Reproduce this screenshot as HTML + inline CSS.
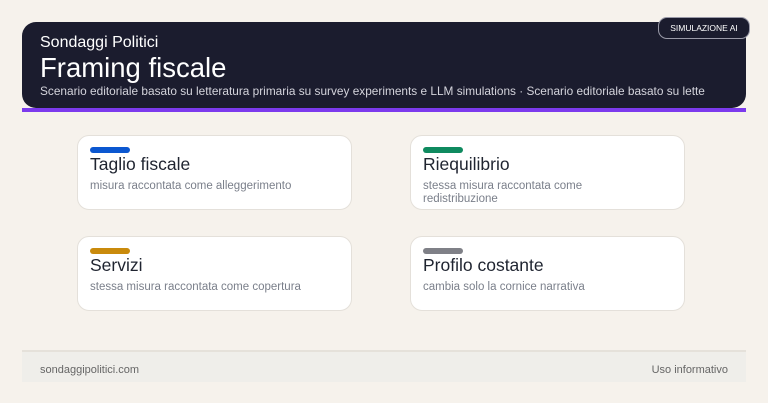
<!DOCTYPE html>
<html><head><meta charset="utf-8"><style>
*{margin:0;padding:0;box-sizing:border-box}
body{width:768px;height:403px;background:#f6f2ec;font-family:"Liberation Sans",sans-serif;position:relative;overflow:hidden}
.hdr{position:absolute;left:22px;top:22px;width:724px;height:86px;background:#1b1c2e;border-radius:14px;color:#fff}
.bar{position:absolute;left:22px;top:108px;width:724px;height:4px;background:#7c3aed}
.hdr .a{position:absolute;left:18px;top:12px;font-size:16px}
.hdr .b{position:absolute;left:18px;top:30px;font-size:27.5px}
.hdr .c{position:absolute;left:18px;top:62px;font-size:11.85px;color:#d4d4dc;white-space:nowrap;width:690px;overflow:hidden}
.badge{position:absolute;left:658px;top:17px;width:92px;height:22px;border:1px solid #9a9aa8;border-radius:9px;color:#fff;font-size:8.5px;text-align:center;line-height:21px;background:#1b1c2e}
.card{position:absolute;width:275px;height:75px;background:#fff;border:1px solid #e4e0da;border-radius:12px}
.card i{position:absolute;left:12px;top:11px;width:40px;height:6px;border-radius:3px}
.card .t{position:absolute;left:12px;top:18px;font-size:17.5px;color:#1f2430}
.card .s{position:absolute;left:12px;top:44px;font-size:11.5px;color:#7a7f8a;line-height:13px;width:220px}
.foot{position:absolute;left:22px;top:350px;width:724px;height:32px;background:#efeeea;border-top:2px solid #e5e1da;font-size:11px;color:#666}
</style></head><body>
<div class="hdr"><div class="a">Sondaggi Politici</div><div class="b">Framing fiscale</div><div class="c">Scenario editoriale basato su letteratura primaria su survey experiments e LLM simulations · Scenario editoriale basato su lette</div></div>
<div class="badge">SIMULAZIONE AI</div>
<div class="bar"></div>
<div class="card" style="left:77px;top:135px"><i style="background:#0b57d0"></i><div class="t">Taglio fiscale</div><div class="s">misura raccontata come alleggerimento</div></div>
<div class="card" style="left:410px;top:135px"><i style="background:#0f8a5f"></i><div class="t">Riequilibrio</div><div class="s">stessa misura raccontata come redistribuzione</div></div>
<div class="card" style="left:77px;top:236px"><i style="background:#c98a0c"></i><div class="t">Servizi</div><div class="s">stessa misura raccontata come copertura</div></div>
<div class="card" style="left:410px;top:236px"><i style="background:#7f8087"></i><div class="t">Profilo costante</div><div class="s">cambia solo la cornice narrativa</div></div>
<div class="foot"><span style="position:absolute;left:18px;top:12px">sondaggipolitici.com</span><span style="position:absolute;right:18px;top:12px">Uso informativo</span></div>
</body></html>
